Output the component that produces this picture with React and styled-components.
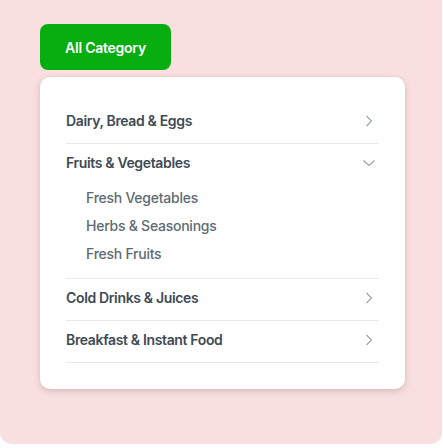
import React from 'react';
import styled, { createGlobalStyle } from 'styled-components';

const GlobalStyle = createGlobalStyle`
  body {
    margin: 0;
    background: #ffffff;
    font-family: Inter, "Noto Sans", sans-serif;
  }
`;

const Panel = styled.div`
  width: 442px;
  height: 444px;
  box-sizing: border-box;
  background: #f9dfdf;
  border-radius: 0 0 12px 12px;
  padding: 24px 0 0 40px;
  display: flex;
  flex-direction: column;
  align-items: flex-start;
  gap: 7px;
`;

const CategoryButton = styled.button`
  width: 131px;
  height: 46px;
  border: none;
  border-radius: 8px;
  background: #08ad0f;
  color: #ffffff;
  font-family: Inter, sans-serif;
  font-size: 14px;
  font-weight: 600;
  letter-spacing: -0.25px;
  cursor: pointer;
`;

const Card = styled.div`
  width: 365px;
  box-sizing: border-box;
  background: #ffffff;
  border-radius: 10px;
  box-shadow: 0 2px 6px rgba(120, 70, 70, 0.25);
  padding: 25px 26px 26px;
`;

const Item = styled.div`
  border-bottom: 1px solid #e6e9ea;
  padding: 10px 0 ${p => (p.$open ? '10px' : '14px')};
`;

const Head = styled.div`
  display: flex;
  align-items: center;
  justify-content: space-between;
  font-size: 14px;
  line-height: 17px;
  font-weight: 600;
  letter-spacing: -0.35px;
  color: #3e4a55;
`;

const IconBox = styled.span`
  width: 20px;
  height: 17px;
  display: flex;
  align-items: center;
  justify-content: center;
  color: #9aa1a6;
`;

const SubList = styled.div`
  margin-top: 13px;
  padding-left: 20px;
  display: flex;
  flex-direction: column;
`;

const SubItem = styled.div`
  font-size: 14px;
  line-height: 28px;
  font-weight: 500;
  letter-spacing: -0.25px;
  color: #5e6a73;
`;

const Chevron = ({ open }) => (
  <svg width="14" height="14" viewBox="0 0 14 14" fill="none">
    {open ? (
      <path d="M1.5 4.5 L7 9.5 L12.5 4.5" stroke="currentColor" strokeWidth="1.1" />
    ) : (
      <path d="M4.5 2 L9.5 7 L4.5 12" stroke="currentColor" strokeWidth="1.1" />
    )}
  </svg>
);

const categories = [
  { name: 'Dairy, Bread & Eggs' },
  { name: 'Fruits & Vegetables', open: true, subs: ['Fresh Vegetables', 'Herbs & Seasonings', 'Fresh Fruits'] },
  { name: 'Cold Drinks & Juices' },
  { name: 'Breakfast & Instant Food' },
];

const App = () => {
  return (
    <>
      <GlobalStyle />
      <Panel>
        <CategoryButton>All Category</CategoryButton>
        <Card>
          {categories.map(c => (
            <Item key={c.name} $open={c.open}>
              <Head>
                {c.name}
                <IconBox>
                  <Chevron open={c.open} />
                </IconBox>
              </Head>
              {c.subs && (
                <SubList>
                  {c.subs.map(s => (
                    <SubItem key={s}>{s}</SubItem>
                  ))}
                </SubList>
              )}
            </Item>
          ))}
        </Card>
      </Panel>
    </>
  );
};

export default App;
